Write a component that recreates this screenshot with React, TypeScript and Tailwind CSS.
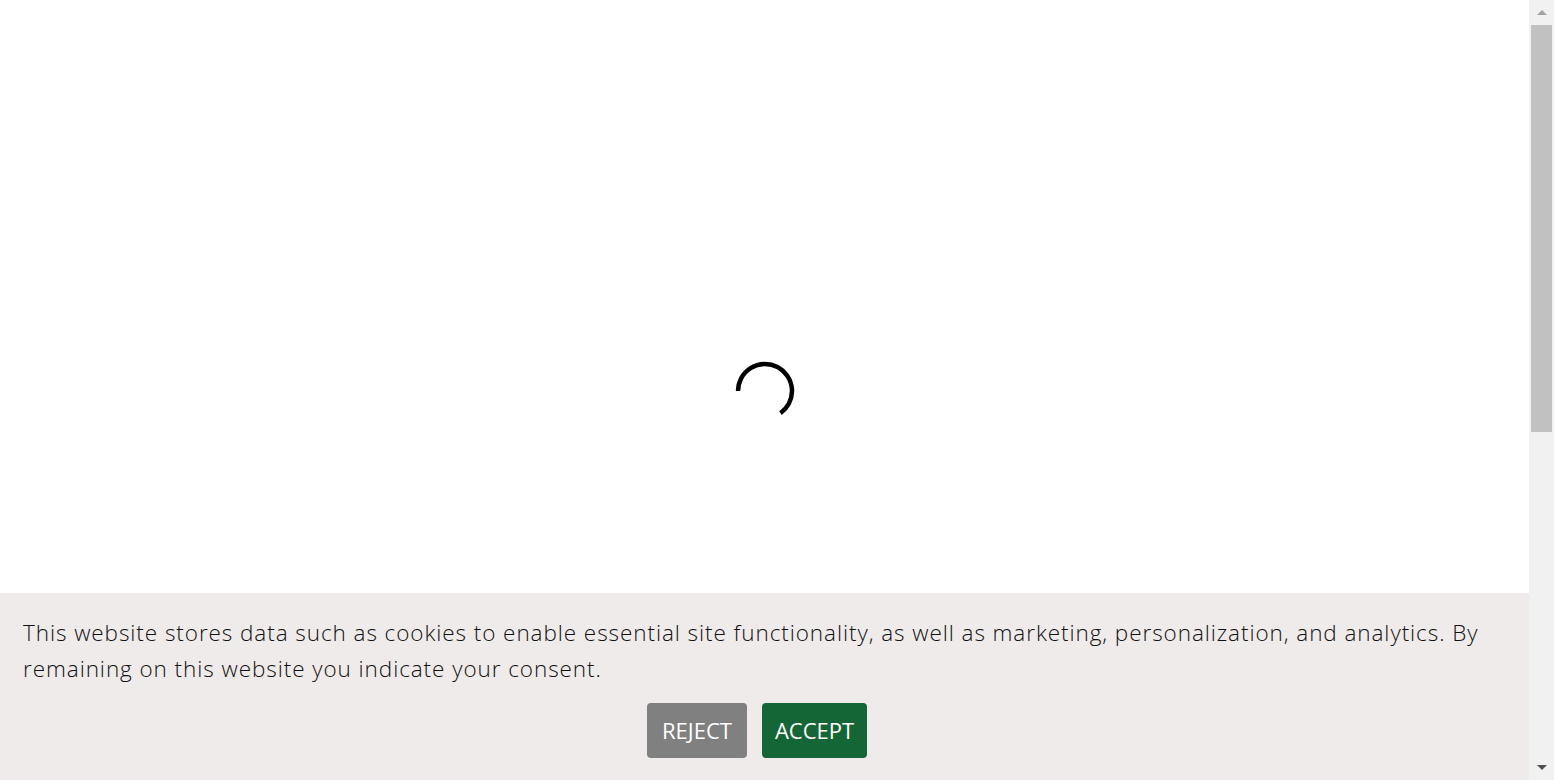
const font = { fontFamily: '"Open Sans", sans-serif' };

const Spinner = () => (
    <svg width="64" height="64" viewBox="0 0 64 64" className="block">
        <path d="M5 34 A27 27 0 1 1 47.5 56.1" fill="none" stroke="#000" strokeWidth="4.5" />
    </svg>
);

const FakeScrollbar = () => (
    <div className="w-[25px] h-full bg-[#f1f1f1] flex flex-col items-center shrink-0">
        <div className="h-[25px] w-full flex items-center justify-center">
            <div className="w-0 h-0 border-l-[5px] border-r-[5px] border-b-[5px] border-l-transparent border-r-transparent border-b-[#a3a3a3]" />
        </div>
        <div className="w-[21px] h-[407px] bg-[#c1c1c1]" />
        <div className="flex-1" />
        <div className="h-[25px] w-full flex items-center justify-center">
            <div className="w-0 h-0 border-l-[5px] border-r-[5px] border-t-[5px] border-l-transparent border-r-transparent border-t-[#505050]" />
        </div>
    </div>
);

const CookieBanner = () => (
    <div className="absolute left-0 right-0 bottom-0 h-[187px] bg-[#efebea] px-[23px] pt-[22px]">
        <p className="text-[22.5px] leading-[36px] tracking-[0.93px] text-[#111] font-light" style={font}>
            This website stores data such as cookies to enable essential site functionality, as well as marketing, personalization, and analytics. By remaining on this website you indicate your consent.
        </p>
        <div className="flex justify-center gap-[15px] mt-[16px] mr-[15px]">
            <button className="h-[55px] w-[100px] rounded-[4px] bg-[#808080] text-white text-[22px] font-medium" style={font}>
                REJECT
            </button>
            <button className="h-[55px] w-[105px] rounded-[4px] bg-[#156636] text-white text-[22px] font-medium" style={font}>
                ACCEPT
            </button>
        </div>
    </div>
);

export default function App() {
    return (
        <div className="h-[780px] w-full flex overflow-hidden bg-white">
            <div className="relative flex-1 flex items-center justify-center">
                <div className="-mt-[2px]">
                    <Spinner />
                </div>
                <CookieBanner />
            </div>
            <FakeScrollbar />
        </div>
    );
}
